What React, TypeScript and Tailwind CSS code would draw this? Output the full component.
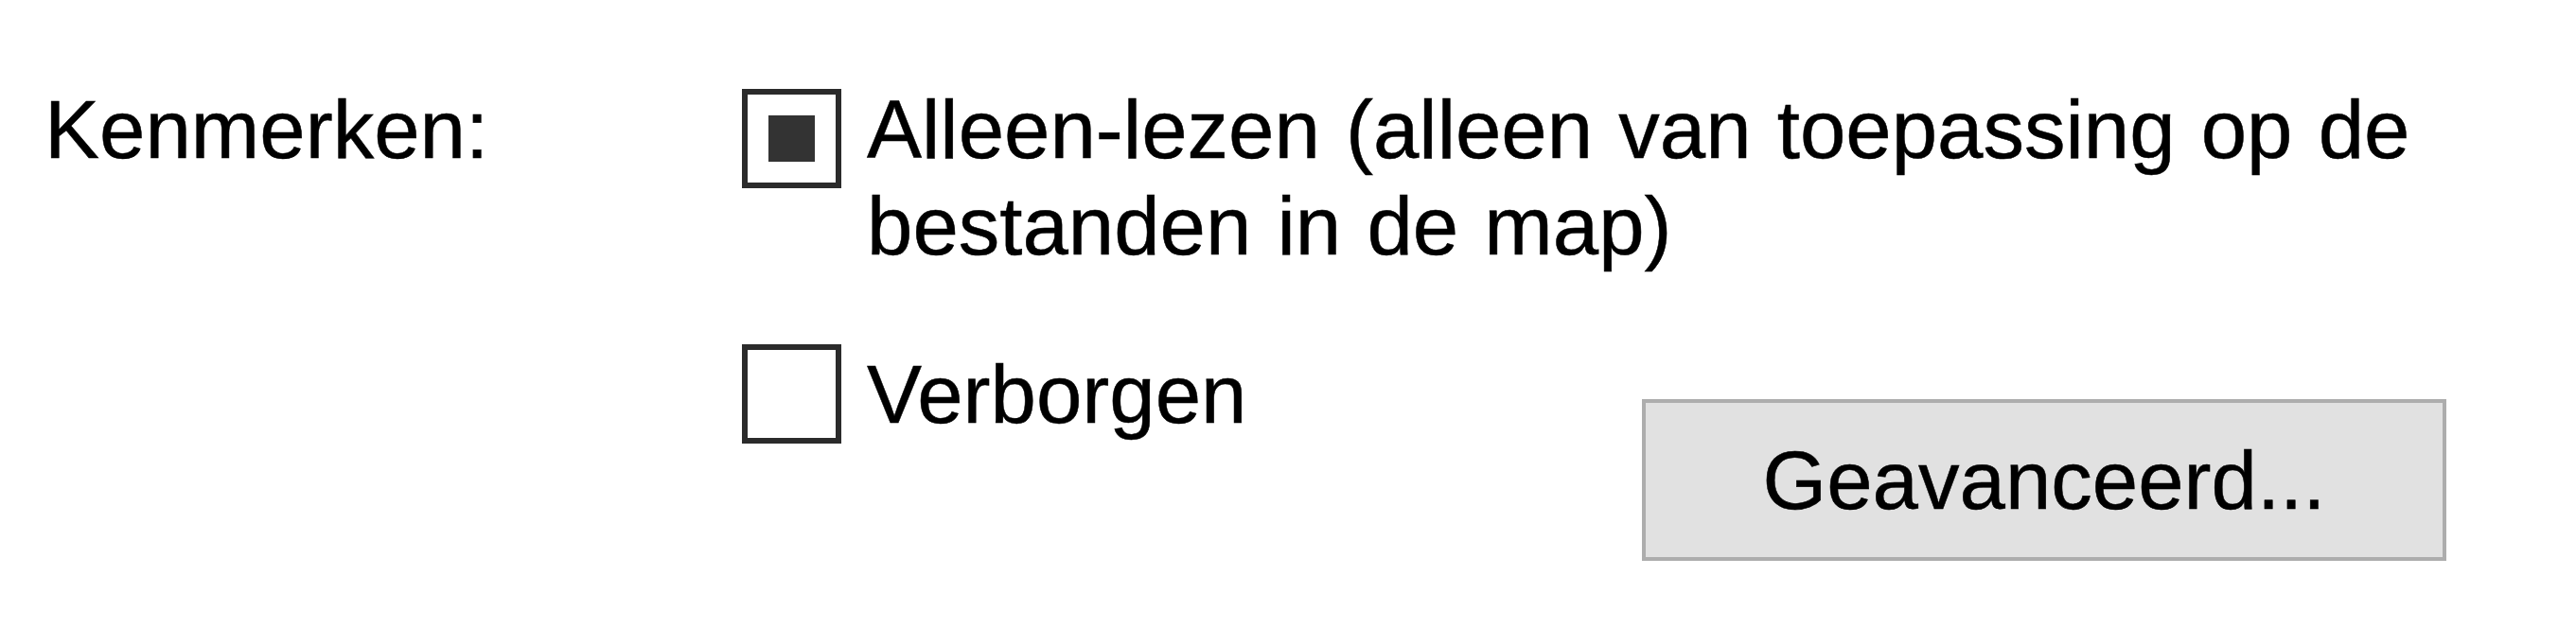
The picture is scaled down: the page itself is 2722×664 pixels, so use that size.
// Folder properties — "Kenmerken" (attributes) section

function CheckBox({ checked }: { checked?: boolean }) {
  return (
    <div className="w-[105px] h-[105px] shrink-0 border-[6px] border-[#2b2b2b] bg-white flex items-center justify-center">
      {checked && <div className="w-[49px] h-[49px] bg-[#333333]" />}
    </div>
  );
}

export default function App() {
  return (
    <div className="w-[2722px] h-[664px] bg-white text-black text-[87px] leading-[102px] font-['Liberation_Sans',Arial,sans-serif] [-webkit-text-stroke:0.5px_black] flex pl-[47px] pt-[86px]">
      <div className="w-[737px] shrink-0">Kenmerken:</div>

      <div className="w-[1801px] flex flex-col">
        {/* Read-only (tri-state) */}
        <div className="flex items-start">
          <div className="mt-[8px]">
            <CheckBox checked />
          </div>
          <div className="ml-[27px] flex-1 [word-spacing:3px]">
            Alleen-lezen (alleen van toepassing op de bestanden in de map)
          </div>
        </div>

        {/* Hidden + advanced button */}
        <div className="flex items-start mt-[74px]">
          <CheckBox />
          <div className="ml-[27px] mt-[2px]">Verborgen</div>
          <button className="ml-auto mt-[58px] w-[850px] h-[171px] border-[4px] border-[#adadad] bg-[#e1e1e1] flex items-center justify-center text-black">
            Geavanceerd...
          </button>
        </div>
      </div>
    </div>
  );
}
